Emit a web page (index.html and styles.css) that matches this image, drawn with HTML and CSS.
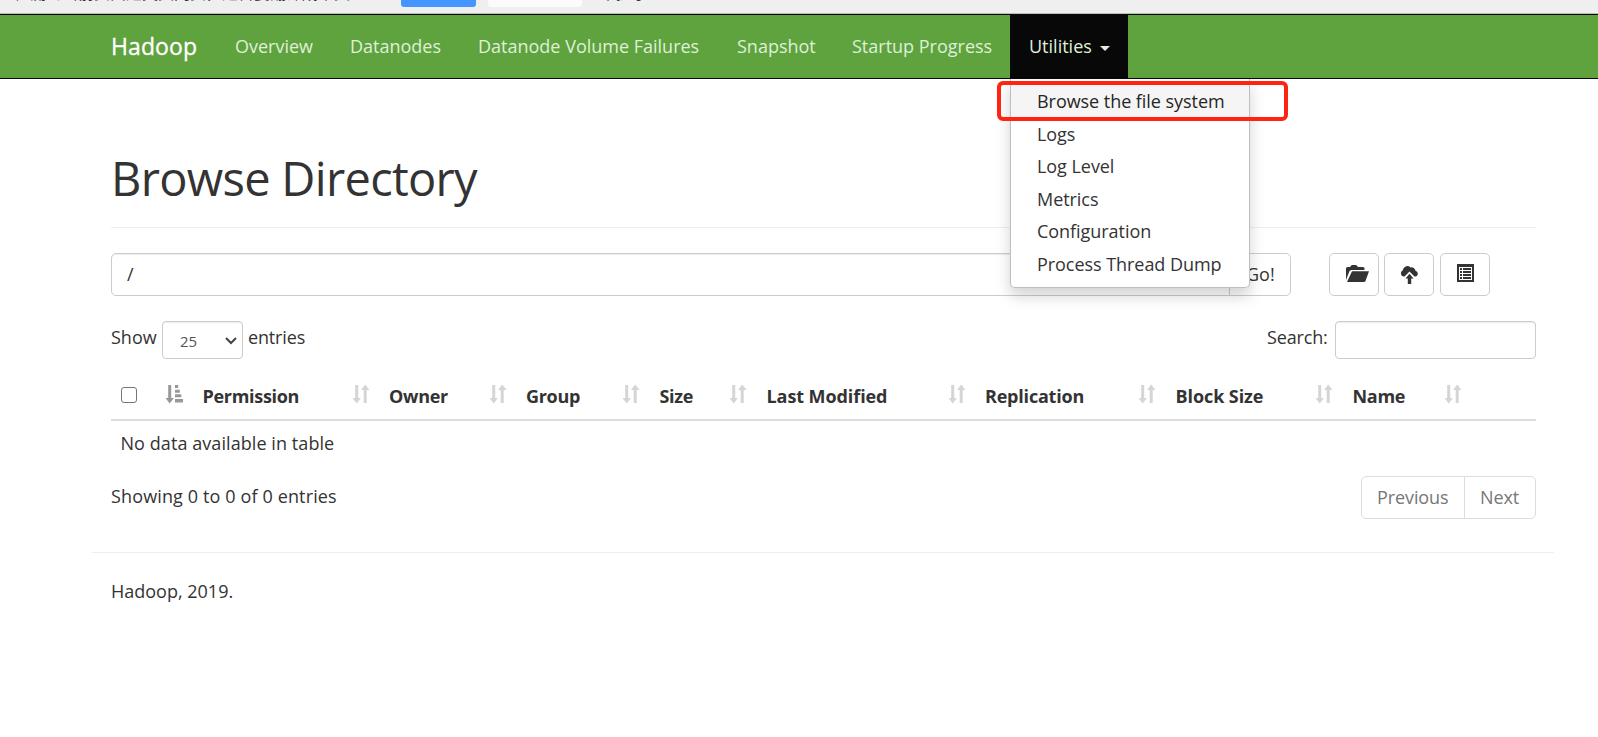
FILE: index.html
```html
<!DOCTYPE html>
<html lang="en">
<head>
<meta charset="utf-8">
<title>Browsing HDFS</title>
<link rel="stylesheet" href="styles.css">
</head>
<body>
<svg width="0" height="0" class="defs">
  <symbol id="sort" viewBox="0 0 18 20"><path d="M3.2 1h3v13h2.7L4.7 19.5.5 14h2.7zM11.7 19V6H9l4.2-5.5L17.500 6h-2.800v13z"/></symbol>
  <symbol id="sorted" viewBox="0 0 18 20"><path d="M3.2 1h3v13h2.7L4.7 19.5.5 14h2.7zM10 1h3.2v3H10zM10 5.7h4.8v3H10zM10 10.3h6.3v3H10zM10 15h8v3.500h-8z"/></symbol>
</svg>
<div class="prompt">
  <span class="prompt-text">检测到当前页面是英文网页，是否要翻译成中文</span>
  <span class="prompt-yes"></span><span class="prompt-no"></span>
  <span class="prompt-never">不提示</span>
</div>
<nav class="navbar">
  <a class="brand"><span>Hadoop</span></a>
  <a class="item overview"><span>Overview</span></a>
  <a class="item datanodes"><span>Datanodes</span></a>
  <a class="item volumes"><span>Datanode Volume Failures</span></a>
  <a class="item snapshot"><span>Snapshot</span></a>
  <a class="item startup"><span>Startup Progress</span></a>
  <div class="item open"><span>Utilities</span><i class="caret"></i>
    <div class="menu">
      <a class="active">Browse the file system</a>
      <a>Logs</a>
      <a>Log Level</a>
      <a>Metrics</a>
      <a>Configuration</a>
      <a>Process Thread Dump</a>
    </div>
    <div class="highlight"></div>
  </div>
</nav>
<main class="container">
  <h1><span>Browse Directory</span></h1>
  <div class="path-row">
    <div class="path">/</div><div class="go">Go!</div>
    <div class="tools">
      <div class="btn"><svg width="23" height="18" viewBox="0 0 23 18"><path d="M0 15V3.5Q0 2 1.5 2H4l1-1.2Q5.500 0 6.500 0h3q1 0 1.500.8L12 2h5q1.500 0 1.500 1.500V5H5.500Q4 5 3.300 6.500zM6 6.200h17L19.500 16q-.4 1-1.500 1H1z"/></svg></div>
      <div class="btn cloud"><svg width="19" height="19" viewBox="0 0 19 19"><path d="M3.500 10.500A3.300 3.300 0 0 1 2.800 4.300 4.500 4.500 0 0 1 10.500 1.500a4 4 0 0 1 5 3.300A3 3 0 0 1 16 10.500h-1.500L9.500 5.500l-5 5zM9.500 7.800l4 4.700h-2.300V18H7.800v-5.500H5.500z"/></svg></div>
      <div class="btn list"><svg width="17" height="18" viewBox="0 0 17 18"><path fill-rule="evenodd" d="M0 0h17v18H0zM2 3v13h13V3zM3 4h2v2H3zM6 4h8v2H6zM3 7h2v2H3zM6 7h8v2H6zM3 10h2v2H3zM6 10h8v2H6zM3 13h2v2H3zM6 13h8v2H6z"/></svg></div>
    </div>
  </div>
  <div class="controls">
    <span class="show">Show</span>
    <span class="select">25<svg width="12" height="8" viewBox="0 0 12 8"><path d="M1 1l5 5 5-5" fill="none" stroke="#444" stroke-width="2"/></svg></span>
    <span class="entries">entries</span>
    <span class="search-label">Search:</span><span class="search"></span>
  </div>
  <div class="thead">
    <div class="th check"><i class="checkbox"></i><svg class="on"><use href="#sorted"/></svg></div>
    <div class="th"><b>Permission</b><svg><use href="#sort"/></svg></div>
    <div class="th"><b>Owner</b><svg><use href="#sort"/></svg></div>
    <div class="th"><b>Group</b><svg><use href="#sort"/></svg></div>
    <div class="th"><b>Size</b><svg><use href="#sort"/></svg></div>
    <div class="th"><b class="loose">Last Modified</b><svg><use href="#sort"/></svg></div>
    <div class="th"><b class="medium">Replication</b><svg><use href="#sort"/></svg></div>
    <div class="th"><b class="loose">Block Size</b><svg><use href="#sort"/></svg></div>
    <div class="th"><b>Name</b><svg><use href="#sort"/></svg></div>
    <div class="th"></div>
  </div>
  <div class="empty"><span>No data available in table</span></div>
  <div class="table-foot">
    <span class="info">Showing 0 to 0 of 0 entries</span>
    <div class="pager"><span class="prev">Previous</span><span class="next">Next</span></div>
  </div>
</main>
<footer class="footer"><span>Hadoop, 2019.</span></footer>
</body>
</html>
```
FILE: styles.css
```css
* { box-sizing: border-box; }
body { margin: 0; height: 737px; overflow: hidden; background: #fff; color: #333; font: 18px/25px "Open Sans", "Noto Sans CJK SC", sans-serif; }
.defs { position: absolute; }
svg { fill: #333; display: block; }
.prompt { height: 14px; background: #efefef; border-bottom: 1px solid #bcbcbc; display: flex; overflow: hidden; padding-left: 14px; font: 16px/24px "Noto Sans CJK SC", sans-serif; }
.prompt-text, .prompt-never { margin-top: -20px; height: 24px; white-space: nowrap; }
.prompt-text { width: 387px; }
.prompt-yes { width: 75px; height: 7px; background: #4595ff; border-radius: 0 0 3px 3px; }
.prompt-no { width: 94px; height: 7px; margin-left: 12px; background: #fbfbfb; border-radius: 0 0 3px 3px; }
.prompt-never { margin-left: 18px; }
.navbar { height: 65px; background: #5fa33e; border: solid #080808; border-width: 1px 0; padding-left: 111px; display: flex; line-height: 63px; color: #dff0d8; white-space: nowrap; }
.brand { width: 105px; color: #fff; font-size: 23px; letter-spacing: .1px; -webkit-text-stroke: .3px #fff; }
.item { padding-left: 19px; }
.overview { width: 115px; }
.datanodes { width: 128px; }
.volumes { width: 259px; }
.snapshot { width: 115px; }
.startup { width: 177px; }
.open { width: 118px; background: #080808; position: relative; height: 63px; display: flex; align-items: center; padding-left: 19px; }
.caret { border: 5px solid transparent; border-top-color: #dff0d8; border-bottom: 0; margin: 4px 0 0 8px; }
.menu { position: absolute; left: 0; top: 64px; width: 240px; height: 209px; background: #fff; border: 1px solid #bfbfbf; border-top: 0; border-radius: 0 0 5px 5px; padding-top: 6px; box-shadow: 0 8px 15px rgba(0,0,0,.175); color: #333; }
.menu a { display: block; height: 32.5px; line-height: 32px; padding-left: 26px; letter-spacing: -.05px; }
.menu .active { background: #f5f5f5; color: #262626; }
.highlight { position: absolute; left: -13px; top: 66px; width: 291px; height: 40px; border: 4px solid #ff2312; border-radius: 6px; }
.container { margin: 0 62px 0 111px; }
h1 { margin: 0; height: 149px; padding-top: 68px; border-bottom: 1px solid #eee; font-weight: 400; font-size: 47px; line-height: 62px; white-space: nowrap; letter-spacing: -.7px; }
.path-row { display: flex; margin-top: 25px; height: 43px; line-height: 41px; }
.path, .go { border: 1px solid #ccc; }
.path { width: 1119px; border-radius: 5px 0 0 5px; padding-left: 15px; box-shadow: inset 0 1px 1px rgba(0,0,0,.075); }
.go { width: 62px; margin-left: -1px; border-radius: 0 5px 5px 0; padding-left: 16px; }
.tools { display: flex; gap: 5.5px; margin-left: 38px; }
.btn { width: 50px; border: 1px solid #ccc; border-radius: 5px; display: flex; justify-content: center; padding-top: 11px; }
.btn:first-child { padding-left: 6px; }
.btn.cloud { padding-top: 12px; margin-left: -.5px; }
.btn.list { padding-top: 10px; padding-left: 2px; }
.controls { display: flex; margin-top: 25px; height: 38px; line-height: 33px; white-space: nowrap; }
.show { width: 51px; }
.select, .search { border: 1px solid #ccc; border-radius: 4px; box-shadow: inset 0 1px 1px rgba(0,0,0,.075); }
.select { width: 81px; padding: 1px 5px 0 17px; display: flex; justify-content: space-between; align-items: center; font-size: 15px; line-height: 34px; color: #555; }
.entries { margin-left: 5px; letter-spacing: -.15px; }
.search-label { margin-left: auto; width: 68px; letter-spacing: -.15px; }
.search { width: 201px; }
.thead { display: grid; grid-template-columns: 82px 186.5px 137px 133.5px 107px 218.5px 190.5px 177px 129px 64.5px; height: 62px; border-bottom: 2px solid #ddd; padding-top: 25px; }
.th { display: flex; justify-content: space-between; padding: 0 10px; height: 25px; line-height: 25px; white-space: nowrap; letter-spacing: -.3px; }
.th b { margin-left: -.5px; }
.loose { letter-spacing: -.08px; }
.medium { letter-spacing: -.2px; }
.th svg { width: 18px; height: 20px; opacity: .2; flex: none; }
.th .on { opacity: .5; }
.checkbox { width: 16px; height: 16px; margin-top: 3px; border: 1px solid #767676; border-radius: 3px; }
.empty { padding: 10px 9.5px 0; height: 55px; letter-spacing: .07px; }
.table-foot { display: flex; justify-content: space-between; height: 43px; line-height: 41px; }
.info { line-height: 40px; letter-spacing: .13px; }
.pager { display: flex; border: 1px solid #ddd; border-radius: 5px; width: 175px; color: #777; letter-spacing: -.1px; }
.prev { width: 103px; border-right: 1px solid #ddd; padding-left: 15px; }
.next { padding-left: 15px; }
.footer { margin: 33px 44px 0 92px; border-top: 1px solid #eee; padding: 26px 19px; }
```
